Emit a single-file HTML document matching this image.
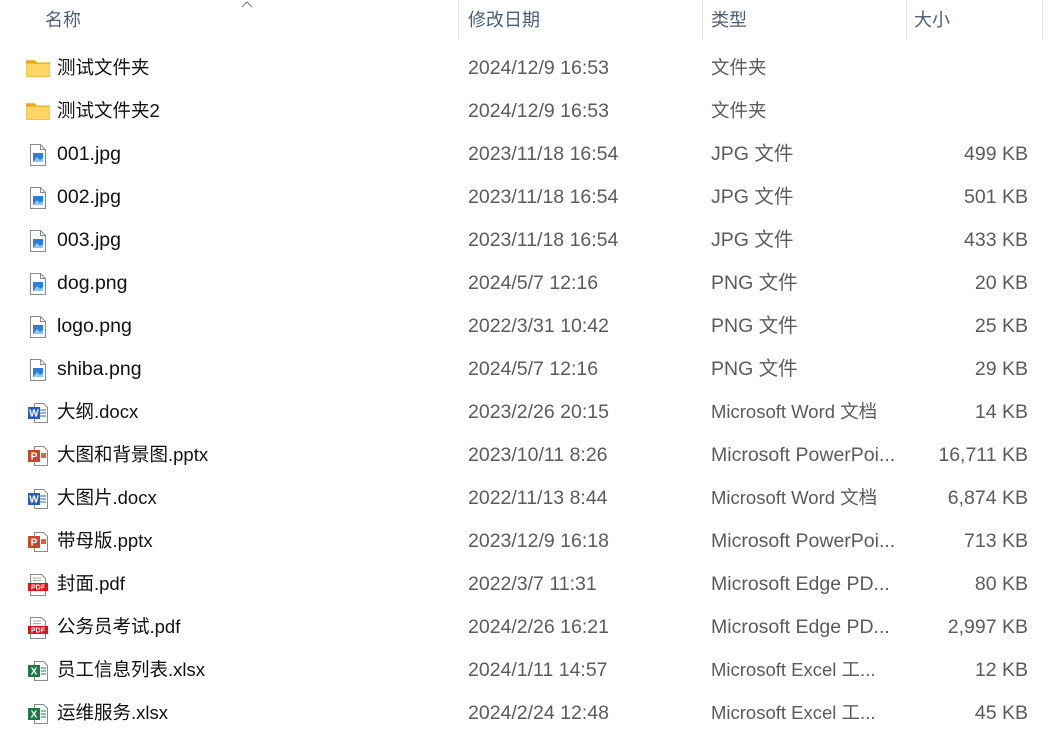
<!DOCTYPE html>
<html><head><meta charset="utf-8"><style>
body{margin:0;width:1056px;height:712px;background:#fff;overflow:hidden;position:relative;font-family:"Liberation Sans","Noto Sans CJK SC",sans-serif;}
.h{position:absolute;top:8px;font-size:18px;line-height:24px;color:#4c5f78;}
.sep{position:absolute;top:0;width:1px;height:40px;background:#e5e5e5;}
.r{position:absolute;left:0;width:1056px;height:43px;font-size:19.5px;}
.r span{position:absolute;top:9px;line-height:24px;height:24px;white-space:nowrap;}
.cj{font-size:18.5px;}
.n{left:57px;color:#111;}
.d{left:468px;color:#5b5b5b;}
.t{left:711px;color:#5b5b5b;}
.s{right:28px;color:#5b5b5b;}
.r svg{position:absolute;left:26px;top:10px;}
</style></head><body>
<svg width="0" height="0" style="position:absolute">
<defs>
<symbol id="fold" viewBox="0 0 22 20"><path d="M0 2h8l2 2h12v4H0z" fill="#e8a818"/><rect x="0" y="5" width="22" height="12" fill="#fcd564"/><rect x="0" y="5" width="22" height="12" fill="none" stroke="#e8b53a" stroke-width=".6"/></symbol>
<symbol id="img" viewBox="0 0 24 24"><path d="M4.5 1.5h10l5 5v16h-15z" fill="#fff" stroke="#8a8a8a"/><path d="M14.5 1.5v5h5" fill="none" stroke="#8a8a8a"/><rect x="7" y="10" width="10" height="9" fill="#2a7fd8"/><path d="M7 19l4-5 3 3 3-2v4z" fill="#8cc8f5"/></symbol>
<symbol id="doc" viewBox="0 0 24 24"><path d="M8.5 2.5h9l4 4v15h-13z" fill="#fff" stroke="#8a8a8a"/><path d="M14 9h6M14 12h6M14 15h6" stroke="#2b5fb4"/><rect x="2" y="6" width="12" height="12" fill="#2b5fb4"/><text x="8" y="15.5" font-size="10" fill="#fff" text-anchor="middle" font-family="Liberation Sans" font-weight="bold">W</text></symbol>
<symbol id="ppt" viewBox="0 0 24 24"><path d="M8.5 2.5h9l4 4v15h-13z" fill="#fff" stroke="#8a8a8a"/><path d="M15 9h5v5h-5z" fill="#e06040"/><rect x="2" y="6" width="12" height="12" fill="#c8482a"/><text x="8" y="15.5" font-size="10" fill="#fff" text-anchor="middle" font-family="Liberation Sans" font-weight="bold">P</text></symbol>
<symbol id="pdf" viewBox="0 0 24 24"><path d="M4.5 1.5h11l4 4v17h-15z" fill="#fff" stroke="#8a8a8a"/><path d="M7 5h8M7 7.5h8" stroke="#aaa"/><rect x="2" y="10" width="20" height="8" fill="#d9141b"/><text x="12" y="16.5" font-size="7" fill="#fff" text-anchor="middle" font-family="Liberation Sans" font-weight="bold">PDF</text></symbol>
<symbol id="xls" viewBox="0 0 24 24"><path d="M8.5 2.5h9l4 4v15h-13z" fill="#fff" stroke="#8a8a8a"/><path d="M15 9h5M15 12h5M15 15h5" stroke="#1e7a44"/><rect x="2" y="6" width="12" height="12" fill="#1e7a44"/><text x="8" y="15.5" font-size="10" fill="#fff" text-anchor="middle" font-family="Liberation Sans" font-weight="bold">X</text></symbol>
</defs></svg>

<div class="h" style="left:45px">名称</div>
<svg style="position:absolute;left:241px;top:0" width="12" height="8"><path d="M1 7l5-5 5 5" fill="none" stroke="#777"/></svg>
<div class="sep" style="left:458px"></div>
<div class="h" style="left:468px">修改日期</div>
<div class="sep" style="left:702px"></div>
<div class="h" style="left:711px">类型</div>
<div class="sep" style="left:906px"></div>
<div class="h" style="left:914px">大小</div>
<div class="sep" style="left:1042px"></div>

<div class="r" style="top:47px"><svg width="24" height="22" style="top:11px"><use href="#fold"/></svg><span class="n cj">测试文件夹</span><span class="d">2024/12/9 16:53</span><span class="t cj">文件夹</span></div>
<div class="r" style="top:90px"><svg width="24" height="22" style="top:11px"><use href="#fold"/></svg><span class="n cj">测试文件夹2</span><span class="d">2024/12/9 16:53</span><span class="t cj">文件夹</span></div>
<div class="r" style="top:133px"><svg width="24" height="24"><use href="#img"/></svg><span class="n">001.jpg</span><span class="d">2023/11/18 16:54</span><span class="t">JPG 文件</span><span class="s">499 KB</span></div>
<div class="r" style="top:176px"><svg width="24" height="24"><use href="#img"/></svg><span class="n">002.jpg</span><span class="d">2023/11/18 16:54</span><span class="t">JPG 文件</span><span class="s">501 KB</span></div>
<div class="r" style="top:219px"><svg width="24" height="24"><use href="#img"/></svg><span class="n">003.jpg</span><span class="d">2023/11/18 16:54</span><span class="t">JPG 文件</span><span class="s">433 KB</span></div>
<div class="r" style="top:262px"><svg width="24" height="24"><use href="#img"/></svg><span class="n">dog.png</span><span class="d">2024/5/7 12:16</span><span class="t">PNG 文件</span><span class="s">20 KB</span></div>
<div class="r" style="top:305px"><svg width="24" height="24"><use href="#img"/></svg><span class="n">logo.png</span><span class="d">2022/3/31 10:42</span><span class="t">PNG 文件</span><span class="s">25 KB</span></div>
<div class="r" style="top:348px"><svg width="24" height="24"><use href="#img"/></svg><span class="n">shiba.png</span><span class="d">2024/5/7 12:16</span><span class="t">PNG 文件</span><span class="s">29 KB</span></div>
<div class="r" style="top:391px"><svg width="24" height="24"><use href="#doc"/></svg><span class="n cj">大纲.docx</span><span class="d">2023/2/26 20:15</span><span class="t cj">Microsoft Word 文档</span><span class="s">14 KB</span></div>
<div class="r" style="top:434px"><svg width="24" height="24"><use href="#ppt"/></svg><span class="n cj">大图和背景图.pptx</span><span class="d">2023/10/11 8:26</span><span class="t">Microsoft PowerPoi...</span><span class="s">16,711 KB</span></div>
<div class="r" style="top:477px"><svg width="24" height="24"><use href="#doc"/></svg><span class="n cj">大图片.docx</span><span class="d">2022/11/13 8:44</span><span class="t cj">Microsoft Word 文档</span><span class="s">6,874 KB</span></div>
<div class="r" style="top:520px"><svg width="24" height="24"><use href="#ppt"/></svg><span class="n cj">带母版.pptx</span><span class="d">2023/12/9 16:18</span><span class="t">Microsoft PowerPoi...</span><span class="s">713 KB</span></div>
<div class="r" style="top:563px"><svg width="24" height="24"><use href="#pdf"/></svg><span class="n cj">封面.pdf</span><span class="d">2022/3/7 11:31</span><span class="t">Microsoft Edge PD...</span><span class="s">80 KB</span></div>
<div class="r" style="top:606px"><svg width="24" height="24"><use href="#pdf"/></svg><span class="n cj">公务员考试.pdf</span><span class="d">2024/2/26 16:21</span><span class="t">Microsoft Edge PD...</span><span class="s">2,997 KB</span></div>
<div class="r" style="top:649px"><svg width="24" height="24"><use href="#xls"/></svg><span class="n cj">员工信息列表.xlsx</span><span class="d">2024/1/11 14:57</span><span class="t cj">Microsoft Excel 工...</span><span class="s">12 KB</span></div>
<div class="r" style="top:692px"><svg width="24" height="24"><use href="#xls"/></svg><span class="n cj">运维服务.xlsx</span><span class="d">2024/2/24 12:48</span><span class="t cj">Microsoft Excel 工...</span><span class="s">45 KB</span></div>
</body></html>
